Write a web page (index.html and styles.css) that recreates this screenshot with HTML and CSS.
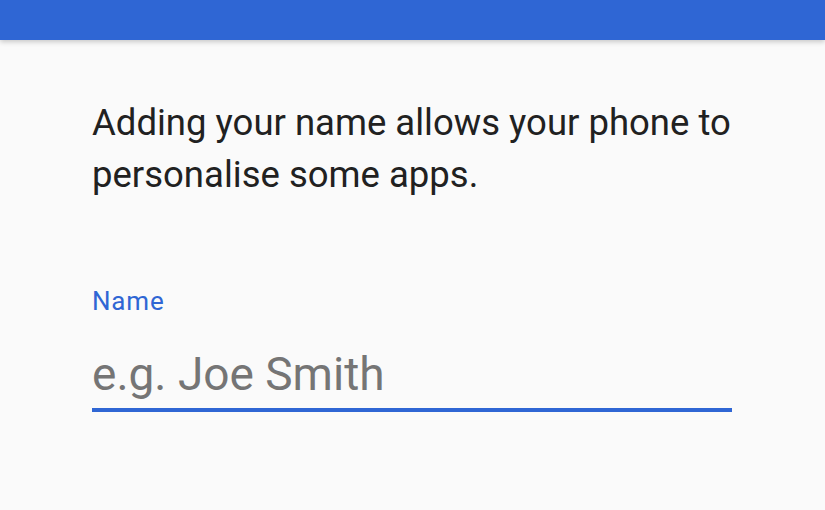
FILE: index.html
```html
<!DOCTYPE html>
<html lang="en">
  <head>
    <meta charset="UTF-8" />
    <meta name="viewport" content="width=device-width, initial-scale=1.0" />
    <title>Name</title>
    <link rel="stylesheet" href="styles.css">
  </head>
  <body>
    <div class="app-bar"></div>
    <div class="content">
      <p class="intro">Adding your name allows your phone to personalise some apps.</p>
      <div class="field">
        <label for="name-input">Name</label>
        <input type="text" id="name-input" placeholder="e.g. Joe Smith" />
      </div>
    </div>
  </body>
</html>
```

FILE: styles.css
```css
body {
  font-family: Roboto, "Noto Sans", sans-serif;
  background-color: #fafafa;
  margin: 0;
  padding: 0;
}

.app-bar {
  height: 40px;
  background-color: #2f66d4;
  box-shadow: 0 2px 5px rgba(0, 0, 0, 0.2);
}

.content {
  width: 640px;
  padding: 57px 0 0 92px;
}

.intro {
  margin: 0;
  font-size: 36.5px;
  line-height: 52px;
  color: #212121;
}

.field {
  margin-top: 86px;
  display: flex;
  flex-direction: column;
}

.field label {
  font-size: 26px;
  line-height: 29px;
  letter-spacing: 0.8px;
  color: #2f66d4;
}

.field input {
  margin-top: 31px;
  padding: 0 0 7px;
  border: none;
  border-bottom: 4px solid #2f66d4;
  background: transparent;
  font-family: inherit;
  font-size: 46px;
  color: #212121;
  outline: none;
}

.field input::placeholder {
  color: #757575;
}
```
